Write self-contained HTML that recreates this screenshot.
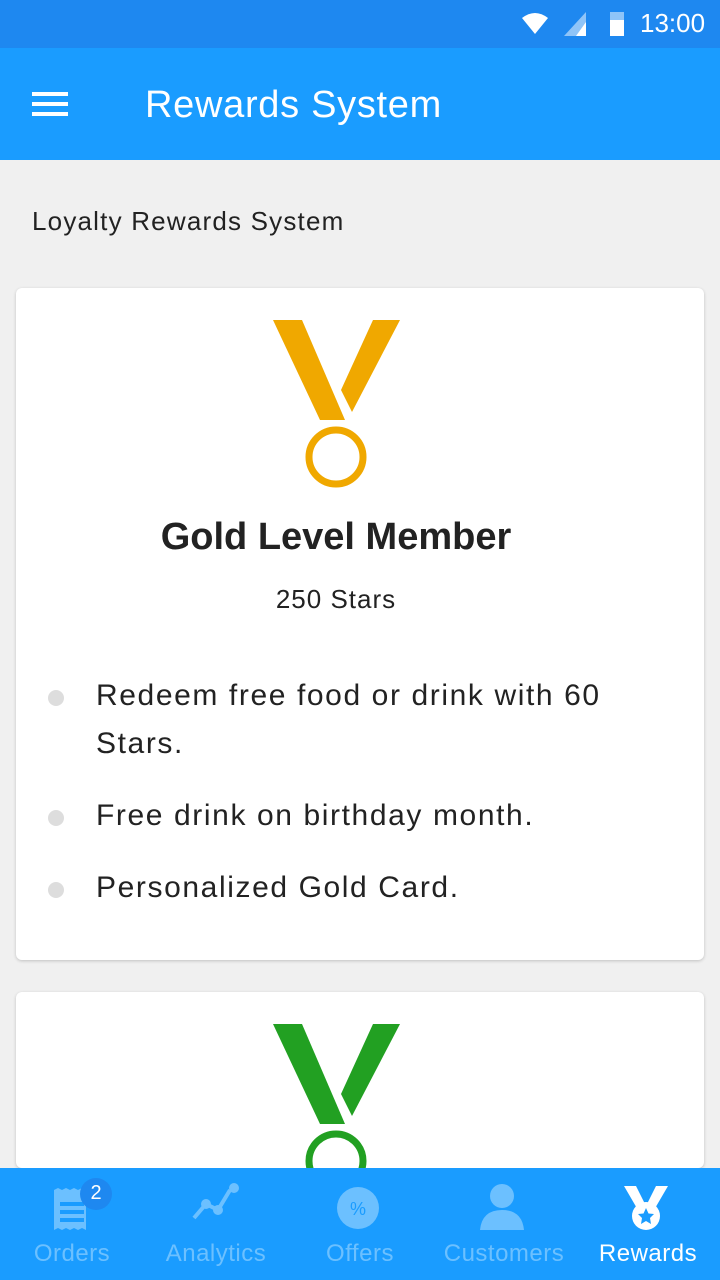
<!DOCTYPE html><html><head><meta charset="utf-8"><style>
html,body{margin:0;width:720px;height:1280px;overflow:hidden}
body{background:#f0f0f0;font-family:"Liberation Sans",sans-serif;position:relative}
.sb{position:absolute;top:0;left:0;width:720px;height:48px;background:#1e88f0}
.ab{position:absolute;top:48px;left:0;width:720px;height:112px;background:#1a9cff}
.card{position:absolute;left:16px;width:688px;background:#fff;border-radius:6px;box-shadow:0 1px 3px rgba(0,0,0,.2)}
.li{position:absolute;left:96px;font-size:30px;color:#222;letter-spacing:1.6px;line-height:48px}
.dot{position:absolute;left:48px;width:16px;height:16px;border-radius:50%;background:#ddd}
.nav{position:absolute;top:1168px;left:0;width:720px;height:112px;background:#1a9cff}
.nl{position:absolute;top:72px;font-size:24px;color:#6cc0ff;text-align:center;width:144px;letter-spacing:.5px}
</style></head><body>
<div class="sb">
<svg style="position:absolute;left:522px;top:12px" width="26" height="24"><path d="M0 6 Q13 -4 26 6 L13 22Z" fill="#fff"/></svg>
<svg style="position:absolute;left:564px;top:12px" width="22" height="24"><path d="M22 0 V24 H0Z" fill="#fff" opacity=".5"/><path d="M22 10 V24 H12Z" fill="#fff"/></svg>
<div style="position:absolute;left:610px;top:12px;width:14px;height:24px;background:#fff;opacity:.5"></div>
<div style="position:absolute;left:610px;top:20px;width:14px;height:16px;background:#fff"></div>
<div style="position:absolute;left:640px;top:8px;font-size:26px;color:#fff">13:00</div>
</div>
<div class="ab">
<div style="position:absolute;left:32px;top:44px;width:36px;height:4px;background:#fff;box-shadow:0 10px 0 #fff,0 20px 0 #fff"></div>
<div style="position:absolute;left:145px;top:36px;font-size:38px;color:#fff;letter-spacing:.7px">Rewards System</div>
</div>
<div style="position:absolute;left:32px;top:206px;font-size:26px;color:#222;letter-spacing:1.2px">Loyalty Rewards System</div>
<div class="card" style="top:288px;height:672px">
<svg style="position:absolute;left:256px;top:32px" width="130" height="172"><g transform="translate(-272,-320)"><path d="M273 320H302L345 420H320Z" fill="#f0a800"/><path d="M373 320H400L352 412L341 390Z" fill="#f0a800"/><circle cx="336" cy="457" r="27" fill="none" stroke="#f0a800" stroke-width="7"/></g></svg>
<div style="position:absolute;left:0;width:640px;top:228px;text-align:center;font-size:38px;font-weight:bold;color:#222">Gold Level Member</div>
<div style="position:absolute;left:0;width:640px;top:296px;text-align:center;font-size:26px;color:#222;letter-spacing:1px">250 Stars</div>
</div>
<div class="dot" style="top:690px"></div><div class="li" style="top:672px">Redeem free food or drink with 60<br>Stars.</div>
<div class="dot" style="top:810px"></div><div class="li" style="top:792px">Free drink on birthday month.</div>
<div class="dot" style="top:882px"></div><div class="li" style="top:864px">Personalized Gold Card.</div>
<div class="card" style="top:992px;height:176px">
<svg style="position:absolute;left:256px;top:32px" width="130" height="144"><g transform="translate(-272,-320)"><path d="M273 320H302L345 420H320Z" fill="#22a022"/><path d="M373 320H400L352 412L341 390Z" fill="#22a022"/><circle cx="336" cy="457" r="27" fill="none" stroke="#22a022" stroke-width="7"/></g></svg>
</div>
<div class="nav">
<svg style="position:absolute;left:52px;top:20px" width="40" height="44"><path d="M2 2 L6 0 L10 2 L14 0 L18 2 L22 0 L26 2 L30 0 L34 2 V42 L30 40 L26 42 L22 40 L18 42 L14 40 L10 42 L6 40 L2 42Z" fill="#6cc0ff"/><rect x="8" y="14" width="24" height="4" fill="#1a9cff"/><rect x="8" y="22" width="24" height="4" fill="#1a9cff"/><rect x="8" y="30" width="24" height="4" fill="#1a9cff"/></svg>
<div style="position:absolute;left:80px;top:10px;width:32px;height:32px;border-radius:50%;background:#1e88f0;color:#fff;font-size:20px;text-align:center;line-height:30px">2</div>
<svg style="position:absolute;left:190px;top:14px" width="52" height="40"><path d="M4 36 L16 22 L28 28 L40 8" stroke="#6cc0ff" stroke-width="4" fill="none"/><circle cx="16" cy="22" r="5" fill="#6cc0ff"/><circle cx="28" cy="28" r="5" fill="#6cc0ff"/><circle cx="44" cy="6" r="5" fill="#6cc0ff"/></svg>
<svg style="position:absolute;left:336px;top:18px" width="44" height="44"><circle cx="22" cy="22" r="21" fill="#6cc0ff"/><text x="22" y="29" font-size="18" fill="#1a9cff" text-anchor="middle" font-family="Liberation Sans">%</text></svg>
<svg style="position:absolute;left:478px;top:14px" width="48" height="50"><circle cx="24" cy="14" r="12" fill="#6cc0ff"/><path d="M2 48 Q4 28 24 28 Q44 28 46 48Z" fill="#6cc0ff"/></svg>
<svg style="position:absolute;left:622px;top:14px" width="48" height="50"><path d="M2 4H14L24 24L34 4H46L32 28H16Z" fill="#fff"/><circle cx="24" cy="34" r="14" fill="#fff"/><path d="M24 26 L26.5 31.5 L32 32 L28 36 L29 42 L24 39 L19 42 L20 36 L16 32 L21.5 31.5Z" fill="#1a9cff"/></svg>
<div class="nl" style="left:0">Orders</div>
<div class="nl" style="left:144px">Analytics</div>
<div class="nl" style="left:288px">Offers</div>
<div class="nl" style="left:432px">Customers</div>
<div class="nl" style="left:576px;color:#fff">Rewards</div>
</div>
</body></html>
